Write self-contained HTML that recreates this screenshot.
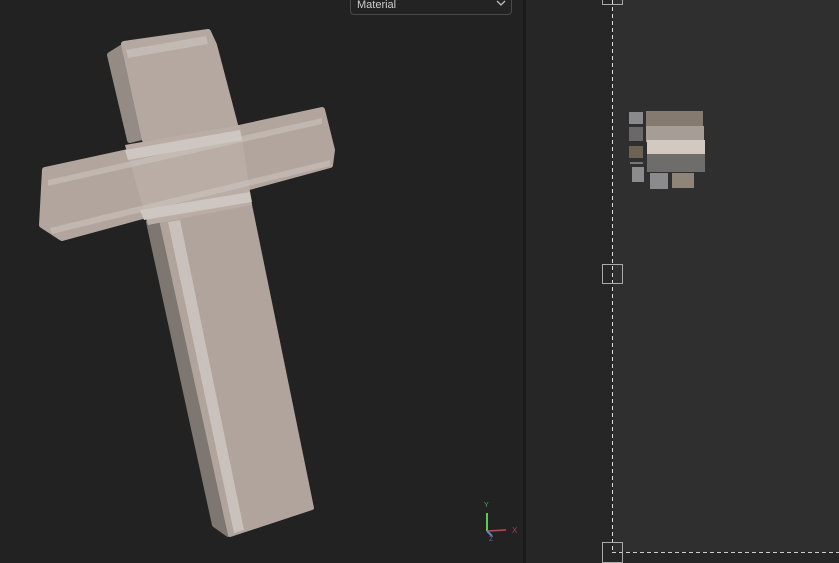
<!DOCTYPE html>
<html><head><style>
body{margin:0;width:839px;height:563px;overflow:hidden;background:#222;font-family:"Liberation Sans",sans-serif;position:relative}
.a{position:absolute}
</style></head><body>
<div class="a" style="left:0;top:0;width:523px;height:563px;background:#222"></div>
<div class="a" style="left:523px;top:0;width:3px;height:563px;background:#1b1b1b"></div>
<div class="a" style="left:526px;top:0;width:87px;height:563px;background:#262626"></div>
<div class="a" style="left:613px;top:0;width:226px;height:552px;background:#2f2f2f"></div>
<div class="a" style="left:613px;top:552px;width:226px;height:11px;background:#262626"></div>
<div class="a" style="left:350px;top:-6px;width:162px;height:21px;border:1px solid #4a4a4a;border-radius:4px;background:#232323;color:#ccc;font-size:11px;line-height:20px;box-sizing:border-box;padding-left:6px">Material
<svg class="a" style="right:5px;top:5px" width="10" height="8"><path d="M1 1 L5 5 L9 1" stroke="#bbb" fill="none" stroke-width="1.3"/></svg></div>
<svg class="a" style="left:0;top:0" width="839" height="563">
<line x1="612.5" y1="0" x2="612.5" y2="552" stroke="#ddd" stroke-dasharray="4,3"/>
<line x1="612" y1="552.5" x2="839" y2="552.5" stroke="#ccc" stroke-dasharray="4,3"/>
<rect x="602.5" y="-3.5" width="20" height="8" fill="none" stroke="#aaa"/>
<rect x="602.5" y="264.5" width="20" height="19" fill="none" stroke="#aaa"/>
<rect x="602.5" y="542.5" width="20" height="20" fill="none" stroke="#aaa"/>
<rect x="646" y="111" width="57" height="29" fill="#857a70"/>
<rect x="646" y="126" width="58" height="16" fill="#a69e96"/>
<rect x="647" y="140" width="58" height="14" fill="#d2c9c0"/>
<rect x="647" y="154" width="58" height="18" fill="#6f6d6c"/>
<rect x="629" y="112" width="14" height="12" fill="#8a8a8c"/>
<rect x="629" y="127" width="14" height="14" fill="#6a6868"/>
<rect x="629" y="146" width="14" height="12" fill="#6e6256"/>
<rect x="630" y="162" width="13" height="2" fill="#777"/>
<rect x="632" y="167" width="12" height="15" fill="#8c8c8e"/>
<rect x="650" y="173" width="18" height="16" fill="#8b8b8d"/>
<rect x="672" y="173" width="22" height="15" fill="#8e8478"/>
<line x1="487" y1="513" x2="487" y2="531" stroke="#5c5" stroke-width="2"/>
<line x1="487" y1="531" x2="506" y2="530" stroke="#a55" stroke-width="1.5"/>
<line x1="487" y1="531" x2="492" y2="536" stroke="#77c" stroke-width="2"/>
<text x="484" y="507" fill="#5a5" font-size="7">Y</text>
<text x="512" y="533" fill="#944" font-size="8">X</text>
<text x="489" y="541" fill="#66a" font-size="7">Z</text>
<g stroke-linejoin="round">
<polygon points="148,222 162,222 228,535 214,525" fill="#7e7670" stroke="#7e7670" stroke-width="4"/>
<polygon points="160,215 248,195 312,508 230,535" fill="#b0a49c" stroke="#b0a49c" stroke-width="4"/>
<polygon points="168,222 180,220 244,530 234,533" fill="#c9c1bb"/>
<polygon points="110,55 126,45 150,135 130,140" fill="#948b85" stroke="#948b85" stroke-width="6"/>
<polygon points="124,44 208,32 214,45 235,125 145,140" fill="#b4a8a0" stroke="#b4a8a0" stroke-width="6"/>
<polygon points="45,170 322,110 332,150 330,165 62,238 42,225" fill="#b2a59d" stroke="#b2a59d" stroke-width="6"/>
</g>
<polygon points="125,145 240,125 252,205 148,225" fill="#b9ada5"/>
<polygon points="125,150 240,130 242,140 128,160" fill="#cec7c1"/>
<polygon points="140,210 250,192 252,202 144,220" fill="#cec7c1"/>
<polygon points="48,180 322,118 322,124 48,186" fill="#d0c9c3" opacity=".5"/>
<polygon points="50,228 330,160 330,166 52,234" fill="#d0c9c3" opacity=".5"/>
<polygon points="126,50 206,36 208,44 128,58" fill="#cec7c1" opacity=".6"/>
</svg>
</body></html>
